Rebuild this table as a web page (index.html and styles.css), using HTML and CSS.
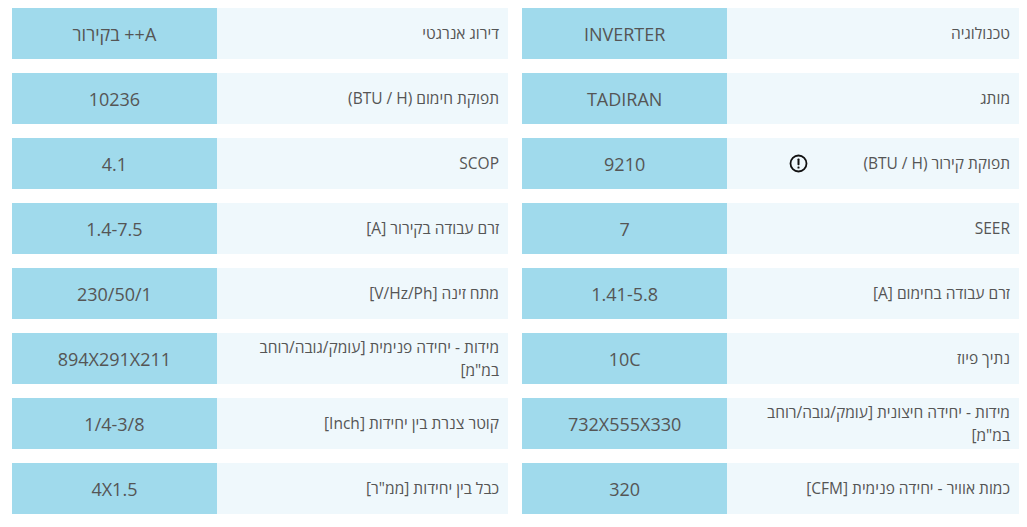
FILE: index.html
```html
<!DOCTYPE html>
<html lang="he" dir="rtl">
<head>
<meta charset="utf-8">
<link rel="stylesheet" href="styles.css">
</head>
<body>
<div class="specs">
  <div class="col">
    <div class="row"><div class="label">טכנולוגיה</div><div class="value">INVERTER</div></div>
    <div class="row"><div class="label">מותג</div><div class="value">TADIRAN</div></div>
    <div class="row"><div class="label has-icon"><span>תפוקת קירור (BTU / H)</span><svg class="info" width="19" height="19" viewBox="0 0 19 19"><circle cx="9.5" cy="9.5" r="8" fill="none" stroke="#111" stroke-width="1.8"/><rect x="8.5" y="4.6" width="2" height="6.6" rx="0.7" fill="#111"/><rect x="8.5" y="12.5" width="2" height="2" rx="0.6" fill="#111"/></svg></div><div class="value">9210</div></div>
    <div class="row"><div class="label">SEER</div><div class="value">7</div></div>
    <div class="row"><div class="label">זרם עבודה בחימום [A]</div><div class="value">1.41-5.8</div></div>
    <div class="row"><div class="label">נתיך פיוז</div><div class="value">10C</div></div>
    <div class="row"><div class="label">מידות - יחידה חיצונית [עומק/גובה/רוחב במ"מ]</div><div class="value">732X555X330</div></div>
    <div class="row"><div class="label">כמות אוויר - יחידה פנימית [CFM]</div><div class="value">320</div></div>
  </div>
  <div class="col">
    <div class="row"><div class="label">דירוג אנרגטי</div><div class="value">A++ בקירור</div></div>
    <div class="row"><div class="label">תפוקת חימום (BTU / H)</div><div class="value">10236</div></div>
    <div class="row"><div class="label">SCOP</div><div class="value">4.1</div></div>
    <div class="row"><div class="label">זרם עבודה בקירור [A]</div><div class="value">1.4-7.5</div></div>
    <div class="row"><div class="label">מתח זינה [V/Hz/Ph]</div><div class="value">230/50/1</div></div>
    <div class="row"><div class="label">מידות - יחידה פנימית [עומק/גובה/רוחב במ"מ]</div><div class="value">894X291X211</div></div>
    <div class="row"><div class="label">קוטר צנרת בין יחידות [Inch]</div><div class="value">1/4-3/8</div></div>
    <div class="row"><div class="label">כבל בין יחידות [ממ"ר]</div><div class="value">4X1.5</div></div>
  </div>
</div>
</body>
</html>
```
FILE: styles.css
```css
html, body {
  margin: 0;
  padding: 0;
  background: #ffffff;
}
body {
  font-family: "Open Sans", "Noto Sans", sans-serif;
  color: #555555;
}
.specs {
  display: grid;
  grid-template-columns: 497px 496px;
  column-gap: 14px;
  padding: 8px 8px 0 12px;
}
.col {
  display: flex;
  flex-direction: column;
  gap: 14px;
}
.row {
  display: flex;
  height: 51px;
}
.label {
  flex: 0 0 58.7%;
  box-sizing: border-box;
  background: #eff8fc;
  display: flex;
  align-items: center;
  padding: 0 9px 0 8px;
  font-size: 15.5px;
  line-height: 23px;
  color: #555555;
}
.has-icon {
  gap: 55px;
}
.info {
  display: block;
  flex: 0 0 auto;
}
.value {
  flex: 1 1 auto;
  background: #a0daec;
  display: flex;
  align-items: center;
  justify-content: center;
  font-size: 18px;
  color: #555555;
}
```
